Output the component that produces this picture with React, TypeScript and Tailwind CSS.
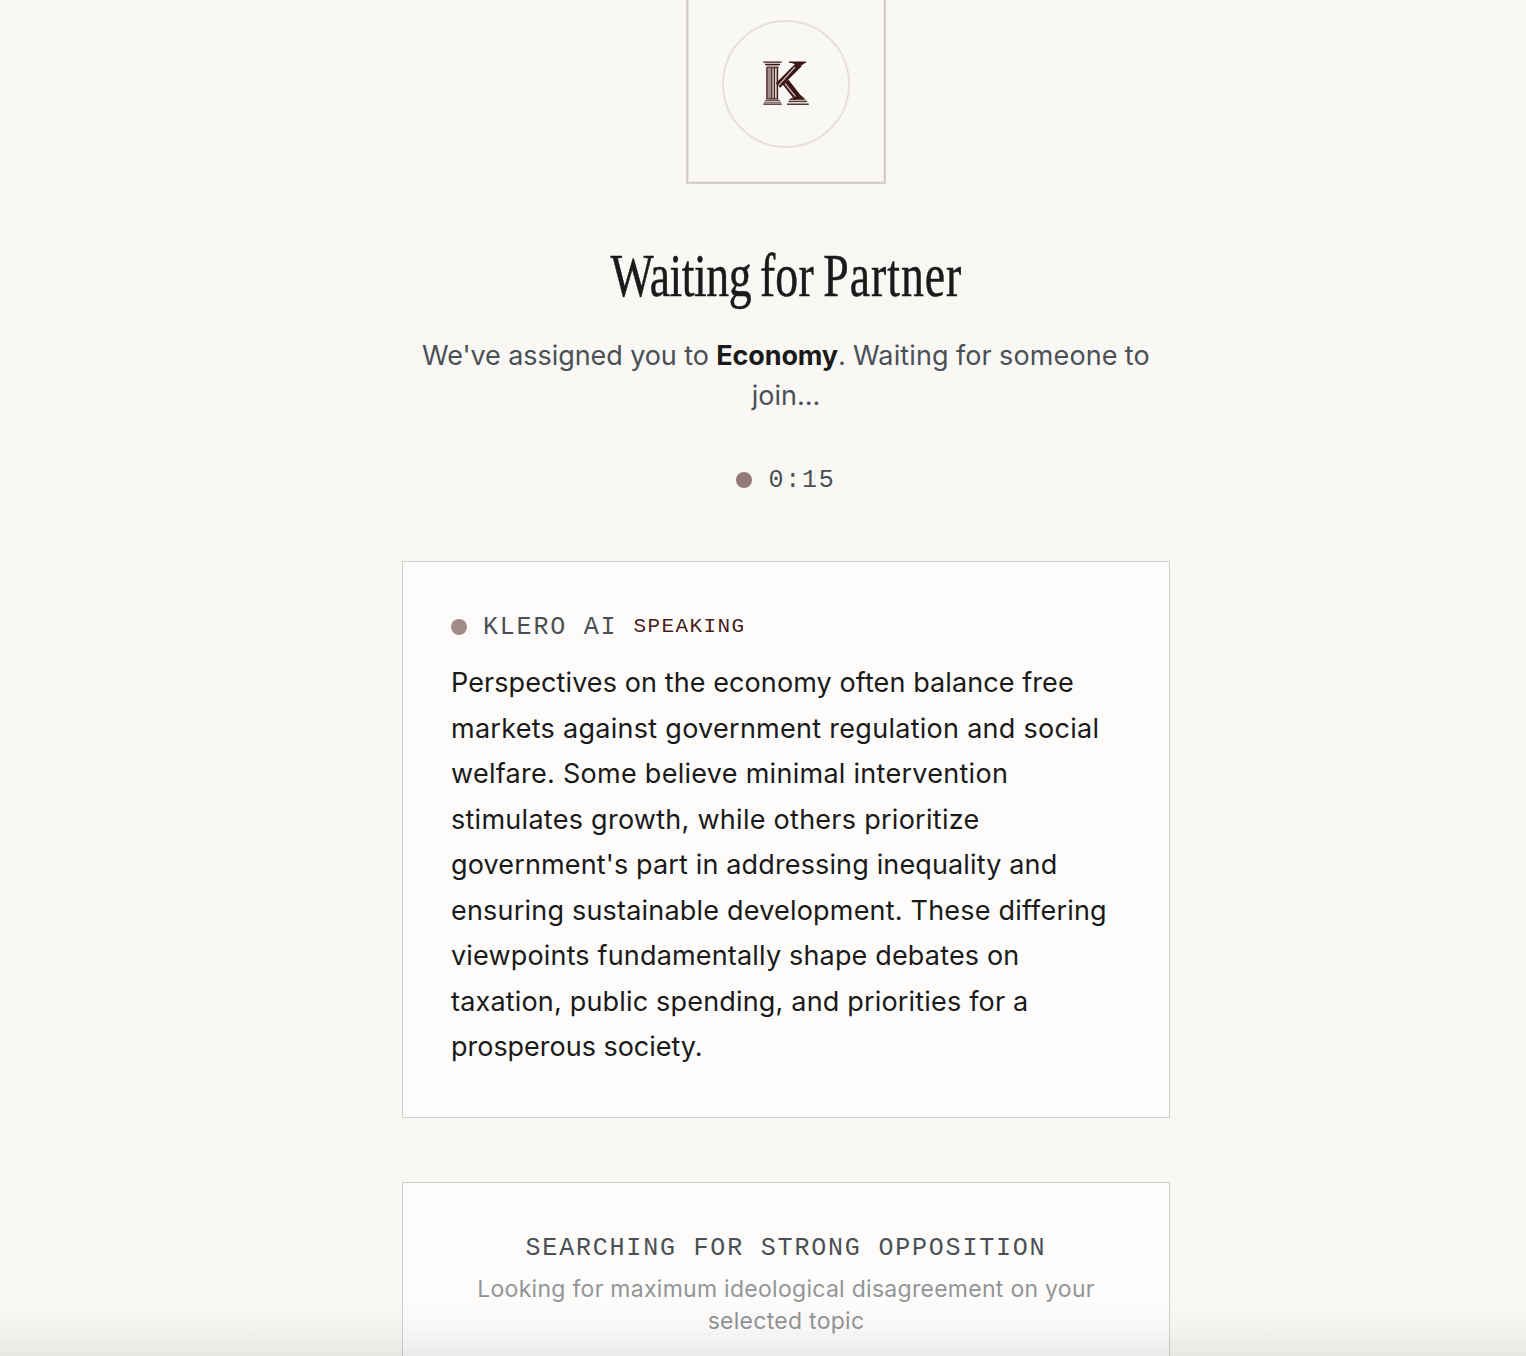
const statement = [
  { text: "Perspectives on the economy often balance free", spacing: "tracking-[0.09px]" },
  { text: "markets against government regulation and social", spacing: "tracking-[0.28px]" },
  { text: "welfare. Some believe minimal intervention", spacing: "tracking-[0.28px]" },
  { text: "stimulates growth, while others prioritize", spacing: "tracking-[0.27px]" },
  { text: "government's part in addressing inequality and", spacing: "tracking-[0.14px]" },
  { text: "ensuring sustainable development. These differing", spacing: "tracking-[0.2px]" },
  { text: "viewpoints fundamentally shape debates on", spacing: "tracking-[0.17px]" },
  { text: "taxation, public spending, and priorities for a", spacing: "tracking-[0.18px]" },
  { text: "prosperous society.", spacing: "tracking-[-0.02px]" },
]

function Logo() {
  return (
    <svg width="48" height="46" viewBox="0 0 48 46" fill="none" stroke="#3b1513">
      {/* capital and base */}
      <path d="M1.3 1.2H19.7M3 3.4H18M1.3 43.2H19.7" strokeWidth="1.3" />
      <path d="M4.3 5H16.7M4.3 6.5H16.7M3 39.4H18M2 41.2H19" strokeWidth="1" opacity="0.8" />
      {/* fluted shaft */}
      <rect x="4.5" y="7" width="11.5" height="31" fill="#a28c89" stroke="none" />
      <path d="M4.9 7V38M9.8 7V38M12.3 7V38M15.6 7V38M4.3 38H16.2" strokeWidth="1.1" />
      <path d="M11 8V37M13.7 8V37" stroke="#f3efeb" strokeWidth="0.8" />
      {/* arms */}
      <path d="M16 24.5L37.5 3" strokeWidth="6.2" />
      <path d="M23.5 21L36 37" strokeWidth="7.6" />
      <path d="M27 1.2H44" strokeWidth="1.4" />
      <path d="M30 1.6H43L38 5Z" fill="#3b1513" strokeWidth="0.8" />
      <path d="M30.5 37L39 34.5L43 38.5H27.5Z" fill="#3b1513" strokeWidth="0.6" />
      <path d="M16.5 24.5L33 6M23 22.5L33.5 35.5" stroke="#c5b8b4" strokeWidth="1.2" />
      <path d="M26.5 40.4H45" strokeWidth="1.5" opacity="0.85" />
      <path d="M25 43.2H46.8" strokeWidth="1.3" />
    </svg>
  )
}

export default function App() {
  return (
    <div className="relative h-[1356px] overflow-hidden bg-[#f9f8f4] pl-[46px] font-['Inter',sans-serif] text-[#1a1a1a]">
      <main className="mx-auto flex w-[768px] flex-col items-center">
        <div className="-mt-4 flex h-[200px] w-[200px] items-start justify-center border-2 border-[#d5cfcc] pt-[34px] shadow-[inset_0_0_0_1px_#eae6e3]">
          <div className="flex h-32 w-32 items-center justify-center rounded-full border-2 border-[#e5e0dd]">
            <Logo />
          </div>
        </div>

        <h1 className="mt-[62px] h-[60px] origin-center scale-x-[0.75] whitespace-nowrap font-['Liberation_Serif',serif] text-[61px] leading-[60px] [-webkit-text-stroke:0.5px_#1a1a1a] [word-spacing:-3px]">
          <span className="tracking-[-0.6px]">Waiting </span>
          <span className="tracking-[0.3px]">for </span>
          <span className="tracking-[1.3px]">Partner</span>
        </h1>

        <p className="mt-[30px] whitespace-nowrap text-center text-[27px] leading-10 text-[#4a5056]">
          <span className="tracking-[-0.08px]">We've assigned you to </span>
          <strong className="font-bold tracking-[-0.15px] text-[#1a1a1a]">Economy</strong>
          <span className="tracking-[0.14px] [word-spacing:-0.6px]">. Waiting for someone to</span>
          <br />
          join...
        </p>

        <div className="mt-12 flex h-8 items-center gap-4 font-['Liberation_Mono',monospace] text-[25px] tracking-[1.8px] text-[#4a5056]">
          <span className="h-4 w-4 rounded-full bg-[#937a79]" />
          <span className="pt-0.5">0:15</span>
        </div>

        <section className="mt-[65px] h-[557px] w-full border border-[#d0cfcd] bg-[#fdfcfa] p-12">
          <div className="mb-4 flex h-[34px] items-center font-['Liberation_Mono',monospace]">
            <span className="mr-4 h-4 w-4 rounded-full bg-[#a18b8a]" />
            <span className="mr-4 pt-0.5 text-[25px] tracking-[1.8px] text-[#4a5056]">KLERO AI</span>
            <span className="text-[21px] tracking-[1.4px] text-[#481c1b]">SPEAKING</span>
          </div>
          <p className="text-[27px] leading-[45.5px]">
            {statement.map((line) => (
              <span key={line.text} className={`block whitespace-nowrap ${line.spacing}`}>
                {line.text}
              </span>
            ))}
          </p>
        </section>

        <section className="mt-16 h-[240px] w-full border border-[#d0cfcd] bg-[#fdfcfa] p-12 text-center">
          <h2 className="mb-2 h-[34px] whitespace-nowrap font-['Liberation_Mono',monospace] text-[25px] leading-[36px] tracking-[1.8px] text-[#4a5056]">
            SEARCHING FOR STRONG OPPOSITION
          </h2>
          <p className="whitespace-nowrap text-[23px] leading-8 tracking-[0.28px] text-[#929597]">
            Looking for maximum ideological disagreement on your
            <br />
            selected topic
          </p>
        </section>
      </main>
      <div className="absolute inset-x-0 bottom-0 h-14 bg-linear-to-t from-black/7 via-black/2 to-transparent" />
    </div>
  )
}
